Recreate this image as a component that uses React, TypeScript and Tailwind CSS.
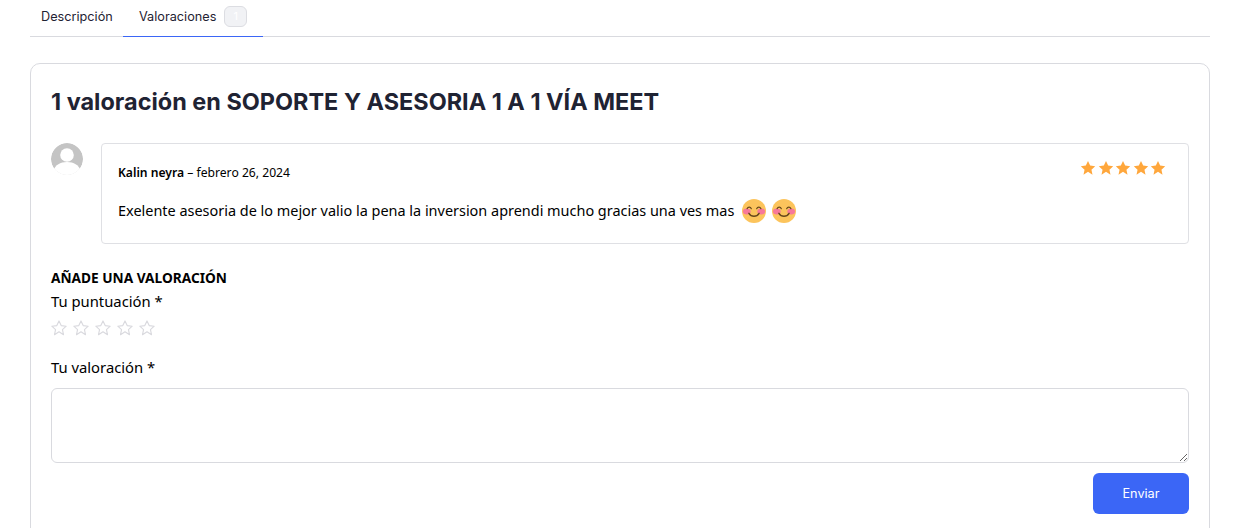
const Star = ({ empty }: { empty?: boolean }) => (
  <svg width="18" height="18" viewBox="0 0 24 24" className="block">
    <path
      d="M12 2.6l2.9 6.2 6.7.8-5 4.6 1.4 6.7L12 17l-6 3.9 1.4-6.700-5-4.600 6.700-.8z"
      fill={empty ? "none" : "#ffa73c"}
      stroke={empty ? "#d9d9de" : "none"}
      strokeWidth={empty ? 1.5 : 0}
      strokeLinejoin="round"
    />
  </svg>
);

const Smile = () => (
  <svg width="24" height="24" viewBox="0 0 26 26" className="block">
    <circle cx="13" cy="13" r="13" fill="#fcc45c" />
    <ellipse cx="5.2" cy="13.500" rx="4.200" ry="3.200" fill="#f7789a" />
    <ellipse cx="20.800" cy="13.500" rx="4.200" ry="3.200" fill="#f7789a" />
    <path d="M5.5 10.5c1-2.4 3.6-2.4 4.6 0M15.9 10.5c1-2.4 3.6-2.4 4.6 0" fill="none" stroke="#66471b" strokeWidth="1.3" strokeLinecap="round" />
    <path d="M7.5 15.5c2.6 4.2 8.4 4.2 11 0" fill="none" stroke="#66471b" strokeWidth="1.6" strokeLinecap="round" />
  </svg>
);

const Avatar = () => (
  <svg width="32" height="32" viewBox="0 0 32 32" className="block rounded-full">
    <circle cx="16" cy="16" r="16" fill="#c4c4c4" />
    <circle cx="16" cy="12" r="6.800" fill="#fff" />
    <path d="M2.500 27c2-5 6.500-8 13.500-8s11.500 3 13.500 8l-5 6H8z" fill="#fff" />
  </svg>
);

export default function App() {
  return (
    <div className="w-[1236px] h-[528px] overflow-hidden bg-white pr-[26px] pl-[30px] font-['Noto_Sans',sans-serif] text-black">
      <div className="flex h-[37px] border-b border-[#d9dadf]">
        <div className="flex w-[93px] items-center pl-[11px] pb-[2px] font-['Inter',sans-serif] text-[12.7px] text-[#1f2333]">
          Descripción
        </div>
        <div className="-mb-px flex w-[140px] items-center gap-[8px] border-b border-[#3b66f6] pl-[16px] pb-[4px] font-['Inter',sans-serif] text-[12.7px] text-[#1f2333]">
          <span className="relative top-[1px]">Valoraciones</span>
          <span className="flex h-[21px] w-[23px] items-center justify-center rounded-[6px] border border-[#dcdde2] bg-[#f1f2f5] text-[11px] text-white">
            1
          </span>
        </div>
      </div>

      <div className="mt-[26px] h-[500px] rounded-t-[10px] border border-[#d9dadf] px-[20px] pt-[23px]">
        <h2 className="font-['Inter',sans-serif] text-[23.45px] leading-[30px] font-bold text-[#1f2333]">
          1 valoración en SOPORTE Y ASESORIA 1 A 1 VÍA MEET
        </h2>

        <div className="mt-[26px] flex gap-[18px]">
          <Avatar />
          <div className="flex h-[101px] flex-1 flex-col rounded-[4px] border border-[#dfe0e4] pt-[13px] pr-[19px] pl-[16px]">
            <div className="flex items-start justify-between">
              <p className="mt-[7px] text-[12.15px] leading-[18px]">
                <span className="font-semibold">Kalin neyra</span> – febrero 26, 2024
              </p>
              <div className="mt-[2px] flex w-[90px] [&>svg]:-mr-[0.5px]">
                <Star /><Star /><Star /><Star /><Star />
              </div>
            </div>
            <div className="mt-[16px] flex items-center gap-[6px] text-[14.45px] leading-[26px]">
              Exelente asesoria de lo mejor valio la pena la inversion aprendi mucho gracias una ves mas
              <span className="ml-[2px]"><Smile /></span>
              <Smile />
            </div>
          </div>
        </div>

        <h3 className="mt-[23px] text-[13.7px] leading-[22px] font-bold">AÑADE UNA VALORACIÓN</h3>
        <p className="text-[14.8px] leading-[24px]">Tu puntuación *</p>
        <div className="mt-[6px] -ml-px flex gap-[4px]">
          <Star empty /><Star empty /><Star empty /><Star empty /><Star empty />
        </div>
        <p className="mt-[18px] text-[14.8px] leading-[24px]">Tu valoración *</p>
        <textarea className="mt-[9px] block h-[75px] w-full rounded-[6px] border border-[#d9dadf] bg-white" />
        <div className="mt-[10px] flex justify-end">
          <button className="h-[41px] w-[96px] rounded-[6px] bg-[#3b66f6] pt-px font-['Inter',sans-serif] text-[12.7px] text-white">
            Enviar
          </button>
        </div>
      </div>
    </div>
  );
}
